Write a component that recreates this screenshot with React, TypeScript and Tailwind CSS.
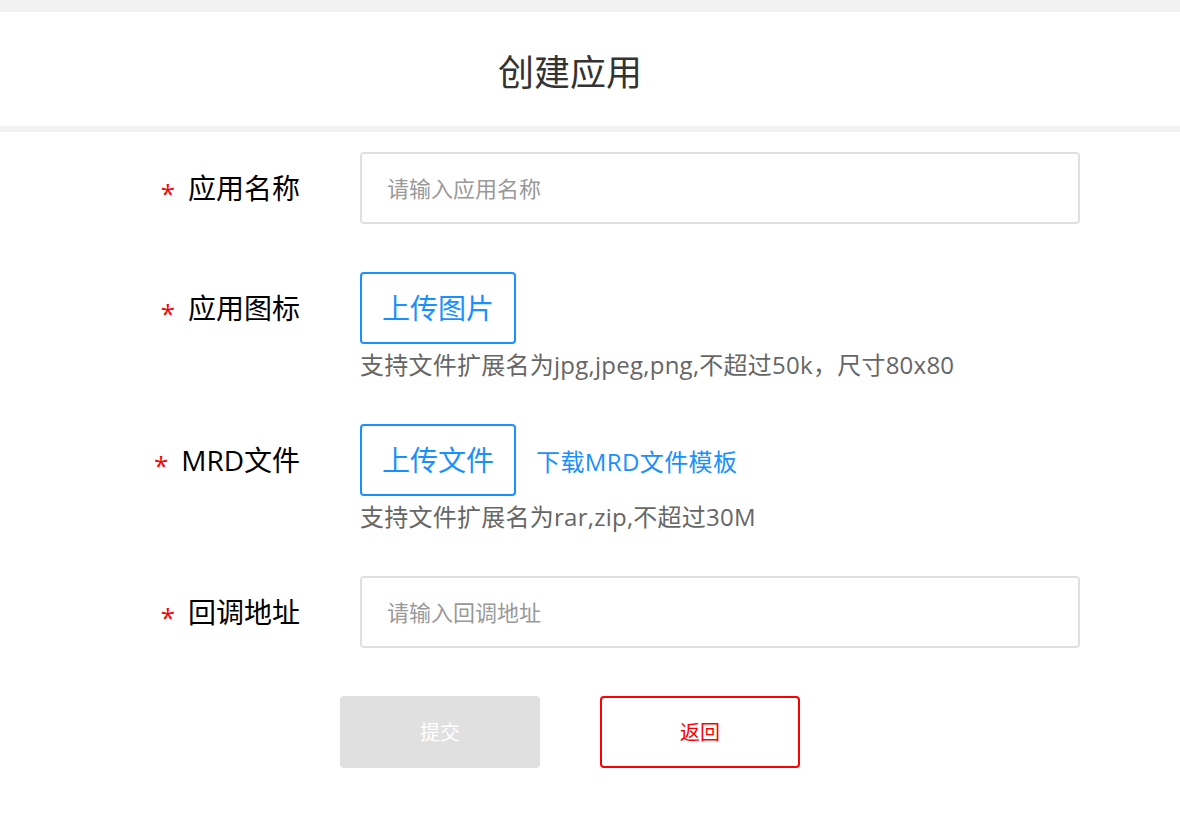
import React from 'react'

const font = { fontFamily: '"Open Sans", "Noto Sans CJK SC", sans-serif' }

function Label({ text }: { text: string }) {
  return (
    <div className="w-[300px] h-[72px] flex items-center justify-end shrink-0">
      <span className="text-[26px] text-[#ff0000] mr-[13px] mt-[10px]">*</span>
      <span className="text-[28px] text-black">{text}</span>
    </div>
  )
}

export default function App() {
  return (
    <div className="min-h-screen bg-white" style={font}>
      <div className="h-[12px] bg-[#f2f2f2]" />
      <div className="w-[1140px] h-[114px] flex items-center justify-center">
        <h1 className="text-[36px] text-[#333] mt-[7px]">创建应用</h1>
      </div>
      <div className="h-[6px] bg-[#f2f2f2]" />

      <div className="w-[1140px] pt-[20px]">
        {/* 应用名称 */}
        <div className="flex items-start">
          <Label text="应用名称" />
          <div className="ml-[60px] w-[720px] h-[72px] border-2 border-[#e0e0e0] rounded-[4px] flex items-center px-[25px]">
            <span className="text-[22px] text-[#999] mt-[1px]">请输入应用名称</span>
          </div>
        </div>

        {/* 应用图标 */}
        <div className="flex items-start mt-[48px]">
          <Label text="应用图标" />
          <div className="ml-[60px] flex flex-col items-start">
            <button className="w-[156px] h-[72px] border-2 border-[#1890ff] rounded-[4px] text-[28px] text-[#1890ff] flex items-center justify-center">
              上传图片
            </button>
            <div className="mt-[5px] leading-[32px] text-[24px] text-[#666] tracking-[0.25px]">
              支持文件扩展名为jpg,jpeg,png,不超过50k，尺寸80x80
            </div>
          </div>
        </div>

        {/* MRD文件 */}
        <div className="flex items-start mt-[43px]">
          <Label text="MRD文件" />
          <div className="ml-[60px] flex flex-col items-start">
            <div className="flex items-center">
              <button className="w-[156px] h-[72px] border-2 border-[#1890ff] rounded-[4px] text-[28px] text-[#1890ff] flex items-center justify-center">
                上传文件
              </button>
              <a className="ml-[20px] mt-[4px] text-[24px] text-[#1890ff] tracking-[0.4px]">下载MRD文件模板</a>
            </div>
            <div className="mt-[5px] leading-[32px] text-[24px] text-[#666] tracking-[0.25px]">
              支持文件扩展名为rar,zip,不超过30M
            </div>
          </div>
        </div>

        {/* 回调地址 */}
        <div className="flex items-start mt-[43px]">
          <Label text="回调地址" />
          <div className="ml-[60px] w-[720px] h-[72px] border-2 border-[#e0e0e0] rounded-[4px] flex items-center px-[25px]">
            <span className="text-[22px] text-[#999] mt-[1px]">请输入回调地址</span>
          </div>
        </div>

        <div className="flex justify-center gap-[60px] mt-[48px]">
          <button className="w-[200px] h-[72px] bg-[#e0e0e0] rounded-[4px] text-[20px] text-white pt-[2px]">提交</button>
          <button className="w-[200px] h-[72px] border-2 border-[#ff0000] rounded-[4px] text-[20px] text-[#ff0000] pt-[2px]">返回</button>
        </div>
      </div>
    </div>
  )
}
